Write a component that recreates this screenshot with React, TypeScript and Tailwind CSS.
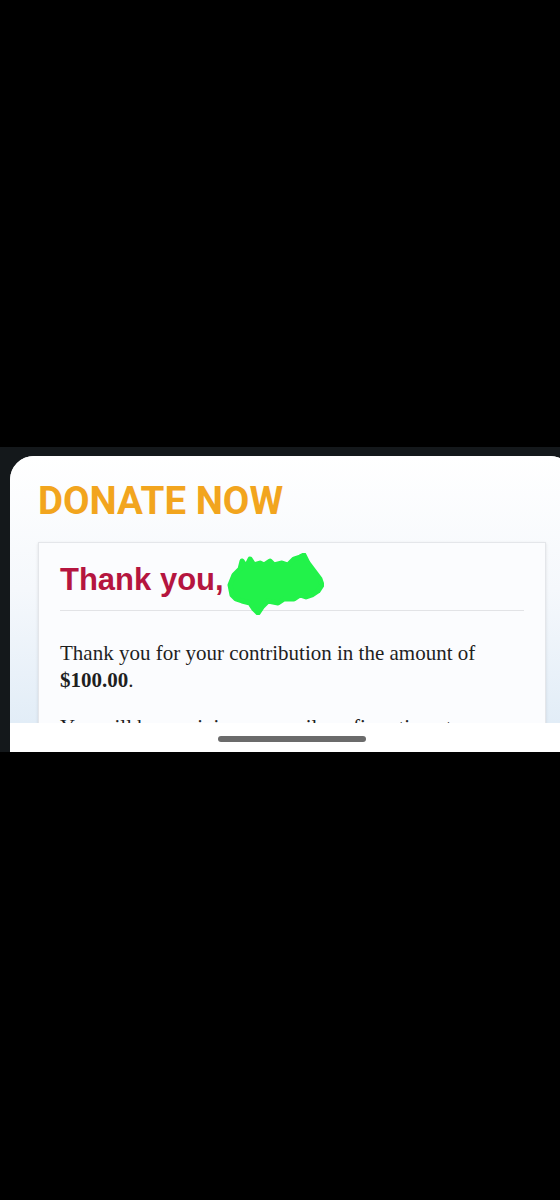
import React from 'react';

function Scribble() {
  return (
    <svg
      className="absolute left-[166px] top-[-11px]"
      width="98"
      height="62"
      viewBox="-2 -2 98 62"
      aria-hidden="true"
    >
      <path
        d="M2 30 L6 20 L12 14 L14 6 L18 12 L22 4 L26 10 L32 8 L36 10 L42 6 L46 10 L54 8 L60 10 L66 4 L72 2 L76 0 L80 8 L86 16 L92 24 L94 30 L90 36 L84 40 L78 42 L72 40 L66 44 L56 44 L50 48 L40 46 L34 52 L30 58 L26 54 L22 48 L14 46 L8 44 L4 40 Z"
        fill="#22f24a"
        stroke="#22f24a"
        strokeWidth="5"
        strokeLinejoin="round"
        strokeLinecap="round"
      />
    </svg>
  );
}

export default function App() {
  return (
    <div className="min-h-[1200px] bg-black">
      <div className="h-[447px] bg-black" />

      {/* phone frame */}
      <div className="bg-[#14181b] pl-[10px] pt-[9px] overflow-hidden">
        <div className="w-[564px] rounded-t-[24px] overflow-hidden bg-white">
          <div className="h-[267px] overflow-hidden bg-gradient-to-b from-white via-[#f5f8fc] to-[#e2edf7] pl-[28px] pt-[26px]">
            <h1 className="text-[38.5px] leading-none font-bold text-[#f2a51e] font-['Roboto',sans-serif]">
              DONATE NOW
            </h1>

            <div className="mt-[21px] w-[508px] border border-[#e4e6ea] bg-[#fbfcfe] shadow-sm px-[21px] pt-[21px] pb-[60px]">
              <div className="border-b border-[#e2e3e6] pb-[15px]">
                <h2 className="relative text-[31px] leading-none font-bold text-[#b5153f] font-['Liberation_Sans',sans-serif]">
                  Thank you,
                  <Scribble />
                </h2>
              </div>

              <div className="pt-[29px] text-[21px] leading-[27px] text-[#1f1f1f] font-['Liberation_Serif',serif]">
                <p>
                  Thank you for your contribution in the amount of <b>$100.00</b>.
                </p>
                <p className="mt-[20px]">
                  You will be receiving an email confirmation at
                </p>
              </div>
            </div>
          </div>

          {/* nav bar */}
          <div className="h-[29px] bg-white flex justify-center pt-[13px]">
            <div className="w-[148px] h-[6px] rounded-full bg-[#6b6b6b]" />
          </div>
        </div>
      </div>
    </div>
  );
}
